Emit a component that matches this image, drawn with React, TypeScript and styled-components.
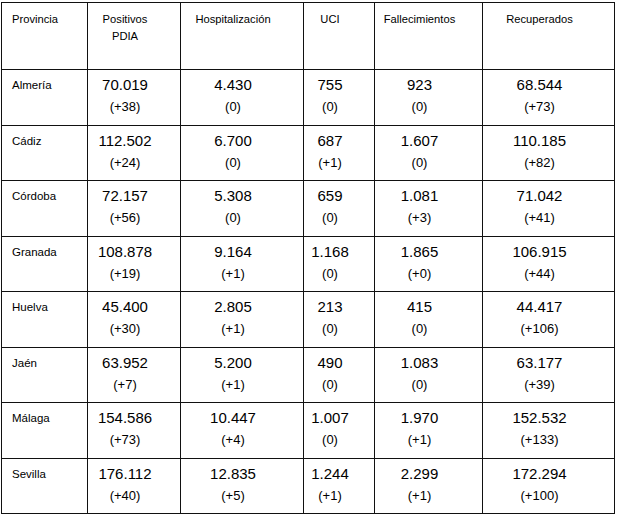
import React from "react";
import styled, { createGlobalStyle } from "styled-components";

type Row = {
  provincia: string;
  values: [string, string][];
};

const headers = ["Positivos\nPDIA", "Hospitalización", "UCI", "Fallecimientos", "Recuperados"];
const widths = [86, 93, 123, 71, 108, 132];

const rows: Row[] = [
  { provincia: "Almería", values: [["70.019", "(+38)"], ["4.430", "(0)"], ["755", "(0)"], ["923", "(0)"], ["68.544", "(+73)"]] },
  { provincia: "Cádiz", values: [["112.502", "(+24)"], ["6.700", "(0)"], ["687", "(+1)"], ["1.607", "(0)"], ["110.185", "(+82)"]] },
  { provincia: "Córdoba", values: [["72.157", "(+56)"], ["5.308", "(0)"], ["659", "(0)"], ["1.081", "(+3)"], ["71.042", "(+41)"]] },
  { provincia: "Granada", values: [["108.878", "(+19)"], ["9.164", "(+1)"], ["1.168", "(0)"], ["1.865", "(+0)"], ["106.915", "(+44)"]] },
  { provincia: "Huelva", values: [["45.400", "(+30)"], ["2.805", "(+1)"], ["213", "(0)"], ["415", "(0)"], ["44.417", "(+106)"]] },
  { provincia: "Jaén", values: [["63.952", "(+7)"], ["5.200", "(+1)"], ["490", "(0)"], ["1.083", "(0)"], ["63.177", "(+39)"]] },
  { provincia: "Málaga", values: [["154.586", "(+73)"], ["10.447", "(+4)"], ["1.007", "(0)"], ["1.970", "(+1)"], ["152.532", "(+133)"]] },
  { provincia: "Sevilla", values: [["176.112", "(+40)"], ["12.835", "(+5)"], ["1.244", "(+1)"], ["2.299", "(+1)"], ["172.294", "(+100)"]] },
];

const App: React.FC = () => {
  return (
    <>
      <GlobalStyle />
      <Table>
        <colgroup>
          {widths.map((w, i) => (
            <col key={i} style={{ width: w }} />
          ))}
        </colgroup>
        <thead>
          <HeadRow>
            <HeadCell $align="left">Provincia</HeadCell>
            {headers.map((h) => (
              <HeadCell key={h} $align="center">
                {h.split("\n").map((line) => (
                  <div key={line}>{line}</div>
                ))}
              </HeadCell>
            ))}
          </HeadRow>
        </thead>
        <tbody>
          {rows.map((row) => (
            <BodyRow key={row.provincia}>
              <LabelCell>{row.provincia}</LabelCell>
              {row.values.map(([total, delta], i) => (
                <ValueCell key={i}>
                  <Total>{total}</Total>
                  <Delta>{delta}</Delta>
                </ValueCell>
              ))}
            </BodyRow>
          ))}
        </tbody>
      </Table>
    </>
  );
};

const GlobalStyle = createGlobalStyle`
  body {
    margin: 0;
    background: #ffffff;
    font-family: "Liberation Sans", Arial, sans-serif;
    color: #000000;
  }
`;

const Table = styled.table`
  margin: 2px 0 0 1px;
  width: 614px;
  table-layout: fixed;
  border-collapse: collapse;

  td,
  th {
    border: 1px solid #111111;
    vertical-align: top;
  }
`;

const HeadRow = styled.tr`
  height: 67px;
`;

const HeadCell = styled.th<{ $align: "left" | "center" }>`
  padding: 8px ${(p) => (p.$align === "left" ? "0" : "18px")} 0
    ${(p) => (p.$align === "left" ? "10px" : "0")};
  text-align: ${(p) => p.$align};
  font-size: 11.2px;
  font-weight: normal;
  line-height: 17px;
`;

const BodyRow = styled.tr`
  height: 55.5px;
`;

const LabelCell = styled.td`
  padding: 8px 0 0 10px;
  font-size: 11.5px;
  line-height: 14px;
`;

const ValueCell = styled.td`
  padding: 4px 18px 0 0;
  text-align: center;
`;

const Total = styled.div`
  font-size: 15px;
  line-height: 22px;
`;

const Delta = styled.div`
  font-size: 13px;
  line-height: 22px;
`;

export default App;
